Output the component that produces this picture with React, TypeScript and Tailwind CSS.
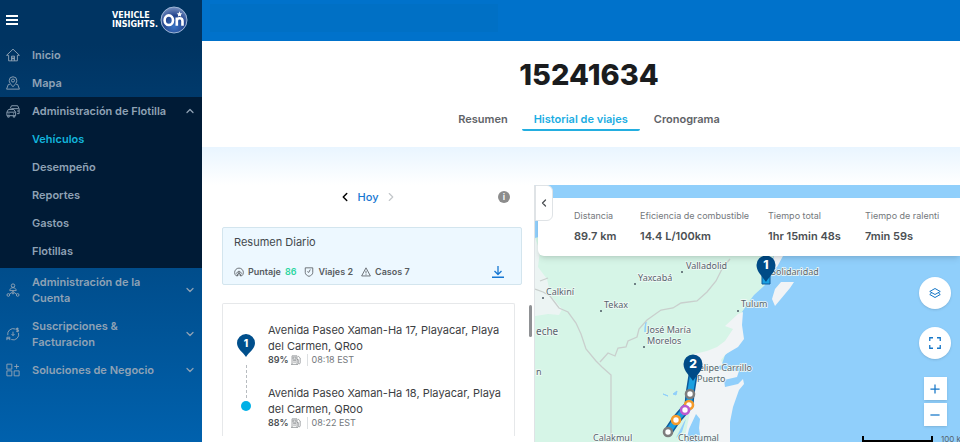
import type { ReactNode } from 'react'
import { ChevronDown, ChevronLeft, ChevronRight, ChevronUp } from 'lucide-react'

type IconProps = { className?: string; children: ReactNode }

function Icon({ className = 'size-3.5', children }: IconProps) {
  return (
    <svg
      viewBox="0 0 24 24"
      fill="none"
      stroke="currentColor"
      strokeWidth="1.6"
      strokeLinejoin="round"
      className={`shrink-0 ${className}`}
      aria-hidden="true"
    >
      {children}
    </svg>
  )
}

const HomeIcon = () => (
  <Icon>
    <path d="M1 12.5 12 2l11 10.5h-3.5V22h-15v-9.5H1z" />
    <path d="M9.500 22v-8h5v8M12 15v5M9.500 18h5" />
  </Icon>
)

const MapIcon = () => (
  <Icon>
    <path d="M12 18.500C7.500 13.500 5.500 11 5.500 7.800a6.500 6.500 0 0 1 13 0c0 3.200-2 5.700-6.500 10.700Z" />
    <circle cx="12" cy="7.800" r="2.600" />
    <path d="M6.500 14.500H4L1 22.500h22l-3-8h-2.500" />
  </Icon>
)

const FleetIcon = () => (
  <Icon>
    <path d="M7 8 9.500 3H20l2.500 5.500v8H19M9 8h12.500M19 12h3.500" />
    <path d="M1.500 14 4 9.500h9.500l3 4.500v6h-15zM1.500 14h15M3 20v2.500h2.500V20M12.500 20v2.500H15V20M4 17h2M12 17h2" />
  </Icon>
)

const AccountIcon = () => (
  <Icon>
    <circle cx="12" cy="4.500" r="3" />
    <path d="M6.500 13c0-3 2.500-5 5.500-5s5.500 2 5.500 5zM12 13v3M12 15l-6 4M12 15l6 4" />
    <circle cx="4" cy="20.500" r="2.300" />
    <circle cx="20" cy="20.500" r="2.300" />
    <circle cx="12" cy="18" r="1" />
  </Icon>
)

const BillingIcon = () => (
  <Icon>
    <path d="M3 14a9.500 9.500 0 0 1 13-10.500M21.500 10A9.500 9.500 0 0 1 9 21.500" />
    <path d="M19.500 1v8M21.500 2.500h-4v2.500h4v2.500h-4M12 8v6M9.500 12l2.500 3 2.500-3" />
    <path d="M1.500 22.500v-5h5v5M1.500 20h5" />
  </Icon>
)

const BusinessIcon = () => (
  <Icon>
    <path d="M1.500 2h8.500v8.500H1.500zM1.500 13.500H10V22H1.500zM14 13.500h8.500V22H14zM18.200 2v8M14.200 6h8" />
  </Icon>
)

const GaugeIcon = () => (
  <Icon className="size-2.5">
    <path
      strokeWidth="2"
      d="M5 21a10.500 10.500 0 1 1 14 0h-4.500v-5h-5v5zM5.500 16a6.800 6.800 0 0 1 13 0M12 16V9M8 17v4M16 17v4"
    />
  </Icon>
)

const TripIcon = () => (
  <Icon className="size-2.5">
    <path
      strokeWidth="2"
      d="M3 2h18v11c0 5-4 7.500-9 9.500C7 20.500 3 18 3 13zM15 6l-3.500 7L8 11"
    />
  </Icon>
)

const WarningIcon = () => (
  <Icon className="size-2.5">
    <path strokeWidth="2" d="M12 2 1.500 21.500h21zM12 9v6.500M12 17.500v2" />
  </Icon>
)

const FuelIcon = () => (
  <Icon className="size-2.5">
    <path d="M2.500 22.500V2h12v20.500M0 22.500h17M5 5h7v5H5zM5 13h7M5 17h7M14.500 11h3v8c0 3 4.500 3 4.500 0V7l-5-4.500" />
  </Icon>
)

const sections = [
  { label: 'Administración de la Cuenta', icon: <AccountIcon /> },
  { label: 'Suscripciones & Facturacion', icon: <BillingIcon /> },
  { label: 'Soluciones de Negocio', icon: <BusinessIcon /> },
]

const fleetLinks = ['Vehículos', 'Desempeño', 'Reportes', 'Gastos', 'Flotillas']

function Logo() {
  return (
    <div className="flex items-center gap-0.5">
      <p className="font-['DejaVu_Sans',sans-serif] text-[8px] leading-[9px] font-bold text-white">
        VEHICLE
        <br />
        INSIGHTS.
      </p>
      <svg viewBox="0 0 28 28" className="size-7" role="img" aria-label="OnStar">
        <defs>
          <radialGradient id="badge" cx="0.5" cy="0.75" r="0.7">
            <stop offset="0" stopColor="#3a74c4" />
            <stop offset="0.6" stopColor="#23458f" />
            <stop offset="1" stopColor="#6b86ba" />
          </radialGradient>
        </defs>
        <circle cx="14" cy="14" r="13" fill="url(#badge)" stroke="#9fb6d6" />
        <g fill="none" stroke="#fff" strokeWidth="2.600">
          <ellipse cx="8.800" cy="14.200" rx="4.200" ry="4.800" />
          <path d="M16.800 19.800v-8.300M16.800 15c0-3.600 5.700-3.600 5.700 0v4.800" />
        </g>
        <path d="m19.500 5.300.8 1.900 2 .2-1.500 1.300.4 2-1.700-1-1.700 1 .4-2-1.500-1.300 2-.2z" fill="#fff" />
      </svg>
    </div>
  )
}

function Sidebar() {
  return (
    <aside className="flex w-[202px] shrink-0 flex-col bg-linear-to-b from-[#003462] from-10% to-[#0061ad] text-[11px] leading-4 font-semibold text-[#8fa2b5]">
      <div className="flex h-[41px] items-center justify-between pr-3.5 pb-0.5 pl-1.5">
        <button type="button" aria-label="Menú" className="flex w-3 flex-col gap-[2px]">
          <span className="h-[2px] bg-white" />
          <span className="h-[2px] bg-white" />
          <span className="h-[2px] bg-white" />
        </button>
        <Logo />
      </div>

      <nav>
        <a href="#inicio" className="flex h-7 items-center gap-3 px-1.5">
          <HomeIcon />
          Inicio
        </a>
        <a href="#mapa" className="flex h-7 items-center gap-3 px-1.5">
          <MapIcon />
          Mapa
        </a>

        <div className="bg-[#001b36] pb-[3px]">
          <button type="button" className="flex h-7 w-full items-center gap-3 px-1.5 text-left">
            <FleetIcon />
            <span className="flex-1">Administración de Flotilla</span>
            <ChevronUp className="size-3" strokeWidth={2.500} />
          </button>
          {fleetLinks.map((label, i) => (
            <a
              key={label}
              href={`#${label}`}
              className={`flex h-7 items-center pl-8 ${i === 0 ? 'text-[#12b4dc]' : ''}`}
            >
              {label}
            </a>
          ))}
        </div>

        {sections.map(({ label, icon }) => (
          <button
            key={label}
            type="button"
            className="flex w-full items-center gap-3 px-1.5 py-1.5 text-left"
          >
            {icon}
            <span className="flex-1 pr-2">{label}</span>
            <ChevronDown className="size-3" strokeWidth={2.500} />
          </button>
        ))}
      </nav>
    </aside>
  )
}

const tabs = ['Resumen', 'Historial de viajes', 'Cronograma']

function VehicleHeader() {
  return (
    <header className="flex flex-col items-center pt-4 pl-4">
      <h1 className="text-[29px] leading-9 font-extrabold text-[#1a1c1e]">15241634</h1>
      <div role="tablist" className="mt-[18px] mb-4 flex gap-0.5 text-[11px] leading-4 font-semibold">
        {tabs.map((tab) => {
          const active = tab === 'Historial de viajes'
          return (
            <button
              key={tab}
              type="button"
              role="tab"
              aria-selected={active}
              className={`rounded-b-xs border-b-2 px-3 pb-0.5 ${
                active ? 'border-[#23aee0] text-[#1bade3]' : 'border-transparent text-[#5f6368]'
              }`}
            >
              {tab}
            </button>
          )
        })}
      </div>
    </header>
  )
}

const stops = [
  { address: 'Avenida Paseo Xaman-Ha 17, Playacar, Playa del Carmen, QRoo', fuel: '89%', time: '08:18 EST' },
  { address: 'Avenida Paseo Xaman-Ha 18, Playacar, Playa del Carmen, QRoo', fuel: '88%', time: '08:22 EST' },
]

function Trips() {
  return (
    <section className="flex w-[332px] shrink-0 flex-col overflow-hidden pl-5">
      <div className="grid h-6 shrink-0 grid-cols-[1fr_auto_1fr] items-center gap-1.5 pr-5 text-[11px]">
        <button type="button" aria-label="Día anterior" className="justify-self-end text-black">
          <ChevronLeft className="size-3.5" strokeWidth={2.500} />
        </button>
        <span className="font-medium text-[#1677d2]">Hoy</span>
        <div className="flex items-center justify-between pr-1">
          <button type="button" aria-label="Día siguiente" className="text-[#c3c7ca]">
            <ChevronRight className="size-3.5" />
          </button>
          <button
            type="button"
            aria-label="Información"
            className="flex size-3 items-center justify-center rounded-full bg-[#8c8c8c] text-[9px] font-semibold text-white"
          >
            i
          </button>
        </div>
      </div>

      <div className="mt-[18px] mr-3 shrink-0 rounded-xs border border-[#d3e5ee] bg-[#edf8ff] px-[11px] pt-1.5 pb-0.5">
        <h2 className="text-[11px] leading-4 text-[#43484d]">Resumen Diario</h2>
        <div className="mt-3 flex h-5 items-center gap-2 text-[9px] font-semibold text-[#575c61]">
          <span className="flex items-center gap-1">
            <GaugeIcon /> Puntaje <span className="text-[#2fd6a1]">86</span>
          </span>
          <span className="flex items-center gap-1">
            <TripIcon /> Viajes 2
          </span>
          <span className="flex items-center gap-1">
            <WarningIcon /> Casos 7
          </span>
          <button type="button" aria-label="Descargar" className="mr-1.5 ml-auto text-[#1677d2]">
            <Icon className="size-3">
              <path strokeWidth="2.600" d="M12 0v16M5 10l7 7 7-7M0 22.500h24" />
            </Icon>
          </button>
        </div>
      </div>

      <div className="mt-[18px] flex min-h-0 flex-1 gap-3.5 overflow-hidden pr-0.5 pb-1.5">
        <ol className="flex-1 rounded-t-xs border border-b-0 border-[#e6e8ea] pt-[18px] pl-3.5">
          {stops.map((stop, i) => (
            <li key={stop.time} className="flex gap-[13px] pb-[19px]">
              <div className="flex w-[18px] shrink-0 flex-col items-center">
                {i === 0 ? (
                  <>
                    <svg viewBox="0 0 18 23" className="mt-3 w-[18px] shrink-0">
                      <path
                        d="M9 23C6 18 0 15 0 9a9 9 0 0 1 18 0c0 6-6 9-9 14Z"
                        fill="#004f8c"
                      />
                      <text x="9" y="12.500" textAnchor="middle" fontSize="10" fontWeight="800" fill="#fff">
                        1
                      </text>
                    </svg>
                    <span className="mt-2 -mb-8 flex-1 border-l border-dashed border-[#b8bcc0]" />
                  </>
                ) : (
                  <span className="mt-4 size-2.5 rounded-full bg-[#00b0e6]" />
                )}
              </div>
              <div>
                <p className="text-[11px] leading-4 text-[#3c4043]">{stop.address}</p>
                <p className="flex items-center gap-0.5 text-[9px] leading-3 text-[#74787c]">
                  <span className="font-semibold text-[#4b4f53]">{stop.fuel}</span>
                  <FuelIcon />
                  <span className="ml-1 border-l border-[#dcdfe1] pl-1">{stop.time}</span>
                </p>
              </div>
            </li>
          ))}
        </ol>
        <div className="mt-0.5 h-8 w-[3px] rounded-full bg-[#8f9194]" />
      </div>
    </section>
  )
}

const stats = [
  { label: 'Distancia', value: '89.7 km' },
  { label: 'Eficiencia de combustible', value: '14.4 L/100km' },
  { label: 'Tiempo total', value: '1hr 15min 48s' },
  { label: 'Tiempo de ralenti', value: '7min 59s' },
]

const towns = [
  { x: 151, y: 84, name: 'Valladolid' },
  { x: 103, y: 96, name: 'Yaxcabá' },
  { x: 11, y: 110, name: 'Calkiní' },
  { x: 69, y: 123, name: 'Tekax' },
  { x: 206, y: 122, name: 'Tulum' },
  { x: 236, y: 90, name: 'Solidaridad' },
  { x: 112, y: 148, name: 'José María' },
  { x: 112, y: 159, name: 'Morelos' },
  { x: 159, y: 186, name: 'Felipe Carrillo' },
  { x: 162, y: 197, name: 'Puerto' },
  { x: 58, y: 256, name: 'Calakmul' },
  { x: 143, y: 256, name: 'Chetumal' },
  { x: 1, y: 190, name: 'n' },
]

const dots = [
  [147, 87],
  [100, 99],
  [8, 113],
  [66, 126],
  [203, 126],
  [109, 162],
]

const events = [
  { x: 155, y: 209, color: '#7d7d7d' },
  { x: 154, y: 220, color: '#f59b2b' },
  { x: 133, y: 247, color: '#7d7d7d' },
  { x: 141, y: 235, color: '#f59b2b' },
  { x: 150, y: 225, color: '#b95bd0' },
]

function MapPin({ x, y, label }: { x: number; y: number; label: string }) {
  return (
    <g transform={`translate(${x} ${y})`}>
      <path d="M0 17C-3 12-9.500 7-9.500 0a9.500 9.500 0 0 1 19 0C9.500 7 3 12 0 17Z" fill="#004b87" />
      <text y="4" textAnchor="middle" fontSize="12" fontWeight="800" fill="#fff">
        {label}
      </text>
    </g>
  )
}

function MapCanvas() {
  return (
    <svg
      viewBox="0 0 425 257"
      preserveAspectRatio="xMinYMin slice"
      className="absolute inset-0 size-full font-['Inter',sans-serif]"
      role="img"
      aria-label="Mapa del recorrido"
    >
      <rect width="425" height="257" fill="#90cffb" />
      {/* mainland */}
      <path
        fill="#d6f5e7"
        d="M0 53 30 45H240L238 78 230 100 219 110 213 118 207 127 204 142 206 150 200 162 190 170 186 182 185 257H0Z"
      />
      {/* bare ground */}
      <g fill="#f1f4f6">
        <path d="M248 60v11l-6 11-5 3 2-14zM240 121l-3-7 3-10 6-7 13 0-4 6-10 12z" />
        <path d="M0 53 5 66 3 82 12 94 16 111 27 124 24 130 13 129 0 131Z" opacity=".8" />
        <path d="m203 129 5-2-1 13 2 14-6 8-12 7-5 6 4 10 14 1-2 6-13 3 1 7 13-3 5-5 1 5-5 6-6 17-3 15 0 20h-47l3-10 4-20 2-26-4-26 6-6 13-3 10-4 8-6 8-12-8-3z" />
      </g>
      {/* lagoons and bays */}
      <g fill="#90cffb">
        <path d="m161 229 4 5-1 9 2 14h-15l3-13zM184 181l8-2-3 5-5 1zM149 237l2-3-4 13-6 6z" />
        <path d="m110 142 1-5-1 10zM128 209l5 2zM138 209l4-3-1 4z" stroke="#90cffb" />
      </g>
      {/* state borders */}
      <g fill="none" stroke="#c9cfcd" strokeWidth="1.300">
        <path d="m0 104 8 3 7 4 9 12 9 4 8 11 5 11 5 15 10 12 6 6 9 8v67" />
        <path d="m65 177 8-9 7 3 3-8 8-1 2-6 9-4 2-8 8-9 14-10 12-2 8-5 16-2 10-9 9-11 7-14 7-8" />
        <path d="m5 96 8-3" />
      </g>
      {/* towns */}
      <g
        fill="#57636d"
        stroke="#f1faf6"
        strokeWidth="1.500"
        paintOrder="stroke"
        fontSize="9"
        className="font-['Noto_Sans',sans-serif]"
      >
        {towns.map((t) => (
          <text key={t.name} x={t.x} y={t.y}>
            {t.name}
          </text>
        ))}
        <text x="1" y="150" fontSize="10">
          eche
        </text>
      </g>
      {dots.map(([x, y]) => (
        <circle key={`${x}-${y}`} cx={x} cy={y} r="1" fill="#4c5963" />
      ))}
      {/* route */}
      <g fill="none" strokeLinejoin="round">
        <path d="m158 190-3 19-1 11-13 15-8 12" stroke="#0a5a9c" strokeWidth="9" />
        <path d="m158 190-3 19-1 11-13 15-8 12" stroke="#1ba0e0" strokeWidth="6" />
      </g>
      <path d="M227 91h8v8h-8z" fill="#1ba0e0" stroke="#0a5a9c" />
      {events.map((e) => (
        <circle key={e.y} cx={e.x} cy={e.y} r="4" fill="#fff" stroke={e.color} strokeWidth="2.600" />
      ))}
      <MapPin x={231} y={80} label="1" />
      <MapPin x={158} y={179} label="2" />
    </svg>
  )
}

function TripMap() {
  return (
    <section className="relative min-w-0 flex-1 overflow-hidden border-l border-[#dfe3e6]">
      <MapCanvas />

      <div className="absolute top-[13px] right-0 left-[3px] grid grid-cols-[66px_128px_97px_1fr] rounded-bl-md bg-white py-3 pl-9 shadow-md">
        {stats.map((s) => (
          <dl key={s.label} className="whitespace-nowrap">
            <dt className="text-[9px] leading-3 text-[#74787c]">{s.label}</dt>
            <dd className="mt-1.5 text-[11px] leading-4 font-semibold text-[#4b4f53]">{s.value}</dd>
          </dl>
        ))}
      </div>
      <button
        type="button"
        aria-label="Ocultar panel"
        className="absolute top-0 left-0 flex h-9 w-[18px] items-center justify-center rounded-r-md border border-[#dfe3e6] bg-white text-[#4b4f53]"
      >
        <ChevronLeft className="size-3" strokeWidth={2.500} />
      </button>

      <div className="absolute right-[9px] bottom-4 flex flex-col items-center text-[#1677c8]">
        <button
          type="button"
          aria-label="Capas"
          className="mb-[18px] flex size-8 items-center justify-center rounded-full bg-white shadow"
        >
          <Icon className="size-3">
            <path strokeWidth="2" d="m12 3 10.500 6L12 15 1.500 9zM5.500 11.500l-4 3.500L12 21l10.500-6-4-3.500" />
          </Icon>
        </button>
        <button
          type="button"
          aria-label="Pantalla completa"
          className="mb-[18px] flex size-8 items-center justify-center rounded-full bg-white shadow"
        >
          <Icon className="size-3">
            <path
              strokeWidth="2.600"
              strokeLinejoin="miter"
              d="M1.500 8V1.500H8M16 1.500h6.500V8M22.500 16v6.500H16M8 22.500H1.500V16"
            />
          </Icon>
        </button>
        <button
          type="button"
          aria-label="Acercar"
          className="mb-[3px] flex size-[23px] items-center justify-center bg-white shadow"
        >
          <Icon className="size-2.5">
            <path strokeWidth="3" d="M12 1v22M1 12h22" />
          </Icon>
        </button>
        <button
          type="button"
          aria-label="Alejar"
          className="flex size-[23px] items-center justify-center bg-white shadow"
        >
          <Icon className="size-2.5">
            <path strokeWidth="3" d="M1 12h22" />
          </Icon>
        </button>
      </div>

      <div className="absolute -right-2 bottom-0 flex h-1.5 items-center gap-2">
        <span className="h-1.5 w-[71px] border-2 border-t-0 border-black" />
        <span className="text-[8px] leading-none whitespace-nowrap text-[#57636d]">100 km</span>
      </div>
    </section>
  )
}

export default function App() {
  return (
    <div className="flex h-screen overflow-hidden bg-white font-['Inter',sans-serif]">
      <Sidebar />
      <main className="flex min-w-0 flex-1 flex-col">
        <div className="h-[41px] shrink-0 bg-[#0072cb] py-1 pl-2">
          <div className="h-7 w-72 bg-[#0070c5]" />
        </div>
        <VehicleHeader />
        <div className="h-[38px] shrink-0 bg-linear-to-b from-[#e9f5ff] to-white" />
        <div className="flex min-h-0 flex-1">
          <Trips />
          <TripMap />
        </div>
      </main>
    </div>
  )
}
